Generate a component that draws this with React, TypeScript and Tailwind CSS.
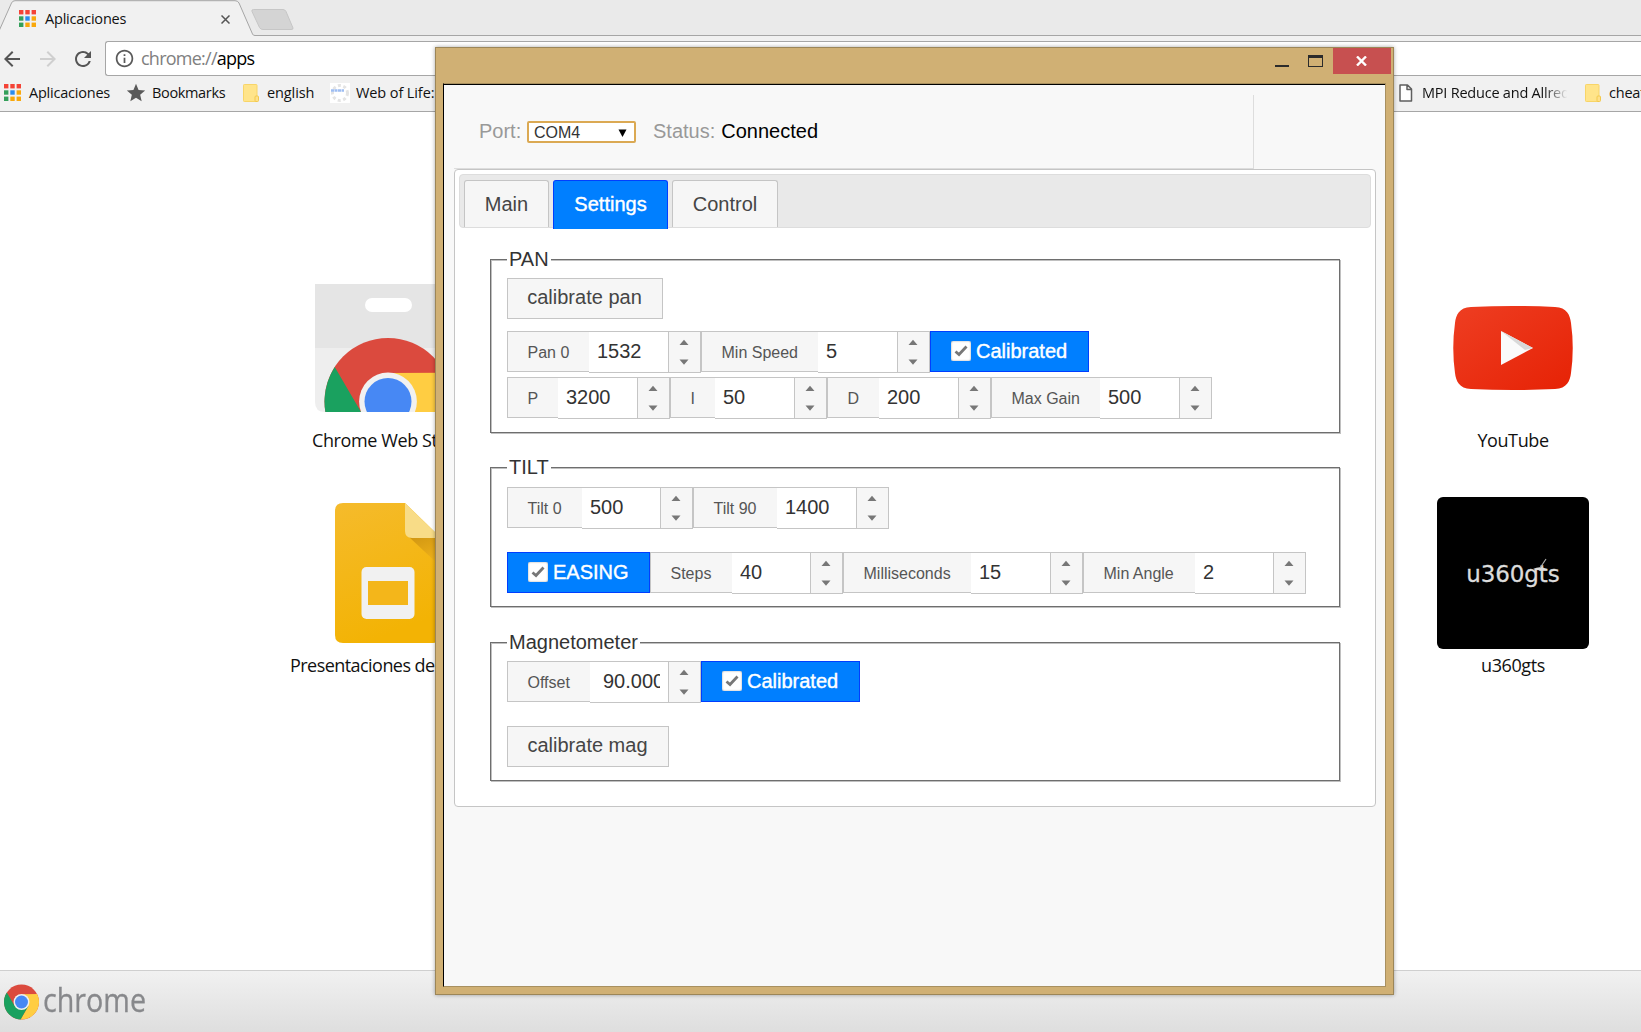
import React from "react";
import { MdArrowBack, MdArrowForward, MdRefresh, MdInfoOutline, MdStar } from "react-icons/md";

function AppsIcon() {
  const colors = ["#f44336", "#f44336", "#f44336", "#34a05a", "#2b8cf0", "#f9a80c", "#34a05a", "#f9a80c", "#f9a80c"];
  return (
    <svg width="17" height="17" viewBox="0 0 17 17" className="-ml-px mr-px shrink-0">
      {colors.map((c, i) => (
        <rect key={i} x={(i % 3) * 6.3} y={Math.floor(i / 3) * 6.3} width="4.4" height="4.4" fill={c} />
      ))}
    </svg>
  );
}

function FolderIcon() {
  return (
    <svg width="16" height="18" viewBox="0 0 16 18" className="shrink-0">
      <rect x="0.5" y="0.5" width="13.5" height="17" rx="0.8" fill="#ffe48a" stroke="#f8d568" />
      <rect x="12" y="12" width="3.5" height="5.5" rx="1" fill="#ffe08a" stroke="#f2c94c" />
    </svg>
  );
}

function ChromeDisc({ cx, cy, r, ring }: { cx: number; cy: number; r: number; ring: string }) {
  const p = (deg: number, rad: number) =>
    `${cx + rad * Math.cos((deg * Math.PI) / 180)} ${cy + rad * Math.sin((deg * Math.PI) / 180)}`;
  const i = r * 0.45;
  return (
    <g>
      <circle cx={cx} cy={cy} r={r} fill="#db4a3e" />
      <path d={`M${p(-90, i)} L${p(-27, r)} A${r} ${r} 0 0 1 ${p(93, r)} L${p(30, i)} Z`} fill="#ffcd42" />
      <path d={`M${p(150, i)} L${p(-147, r)} A${r} ${r} 0 0 0 ${p(93, r)} L${p(30, i)} Z`} fill="#1aa15f" />
      <circle cx={cx} cy={cy} r={r * 0.455} fill={ring} />
      <circle cx={cx} cy={cy} r={r * 0.37} fill="#4788f4" />
    </g>
  );
}

function Arrows() {
  return (
    <div className="flex h-full w-[33px] shrink-0 items-center justify-center border-x border-[#c5c5c5] bg-[#f6f6f6]">
      <svg width="10" height="27" viewBox="0 0 10 27" className="-ml-[2px]">
        <path d="M0.5 6 L5 0.8 L9.5 6Z M0.5 20.6 L5 25.8 L9.5 20.6Z" fill="#777" />
      </svg>
    </div>
  );
}

function Field({ label, value, labelW, inputW = "w-[79px]", pad = "pl-[8px]" }: {
  label: string; value: string; labelW: string; inputW?: string; pad?: string;
}) {
  return (
    <div className="flex h-[42px] items-start">
      <div className={`h-[41px] shrink-0 border-y border-l border-[#c5c5c5] bg-[#f6f6f6] pl-[19.5px] text-[16px] leading-[41px] text-[#555] ${labelW}`}>
        {label}
      </div>
      <div className="flex h-[42px] border-y border-[#c5c5c5] bg-white">
        <div className={`shrink-0 pr-2 text-[20px] leading-[38px] text-[#333] ${inputW} ${pad}`}>
          <div className="overflow-hidden whitespace-nowrap">{value}</div>
        </div>
        <Arrows />
      </div>
    </div>
  );
}

function Toggle({ label, width }: { label: string; width: string }) {
  return (
    <div className={`flex h-[41px] items-center gap-[5px] border border-[#003eff] bg-[#007fff] pl-5 text-[20px] text-white [-webkit-text-stroke:0.4px_white] ${width}`}>
      <div className="-mt-[2px] flex size-5 items-center justify-center rounded-[2px] bg-white shadow-[inset_0_0_2px_#999]">
        <svg width="14" height="12" viewBox="0 0 14 12">
          <path d="M1.5 6.5 L5 9.5 L12.5 1.5" fill="none" stroke="#777" strokeWidth="2.8" />
        </svg>
      </div>
      <span className="-mt-px">{label}</span>
    </div>
  );
}

function Button({ label, width }: { label: string; width: string }) {
  return (
    <button className={`block h-[41px] border border-[#c5c5c5] bg-[#f6f6f6] pb-[2px] pr-px text-center text-[20px] leading-[37px] text-[#454545] ${width}`}>
      {label}
    </button>
  );
}

function Group({ title, className, children }: { title: string; className: string; children: React.ReactNode }) {
  return (
    <section className={`relative w-[850px] border border-[#6e6e6e] pl-4 shadow-[1px_1px_0_0_#c0c0c0,inset_1px_1px_0_0_#c0c0c0] ${className}`}>
      <h2 className="absolute -top-[13px] left-4 bg-white px-[2px] text-[20px] leading-[25px] text-[#333]">{title}</h2>
      {children}
    </section>
  );
}

function Browser() {
  return (
    <div className="flex h-[1032px] w-[1641px] flex-col bg-white font-['Open_Sans',sans-serif]">
      <div className="relative flex h-[36px] shrink-0 items-center bg-[#eaeaea]">
        <svg width="1641" height="36" className="absolute left-0 top-0">
          <path d="M254 35.5 H1641" stroke="#a6a6a6" />
          <path d="M-2 36 L0 30 L11.5 3 Q12.5 0.7 15 0.7 H235 Q237.8 0.7 239 3 L252.5 34 Q253 35.5 255 35.5 V37 H-2Z" fill="#f1f1f1" />
          <path d="M-1 31 L11.5 3 Q12.5 0.7 15 0.7 H235 Q237.8 0.7 239 3 L252.5 34 Q253 35.5 255 35.5" fill="none" stroke="#a6a6a6" />
          <path d="M253.5 9.5 H283 Q285 9.5 286 11.5 L293 28 Q293.5 29.5 291 29.5 H263 Q260.5 29.5 259.5 27.500 L252 11.5 Q251.3 9.5 253.5 9.5Z" fill="#d4d4d4" stroke="#c6c6c6" />
        </svg>
        <div className="relative flex items-center pl-5">
          <AppsIcon />
          <span className="ml-2 mt-px w-[176px] text-[14.5px] tracking-[-0.2px] text-[#111]">Aplicaciones</span>
          <svg width="9" height="9" viewBox="0 0 9 9" className="mt-[2px]"><path d="M0.5 0.5 L8.5 8.5 M8.5 0.5 L0.5 8.5" stroke="#555" strokeWidth="1.5" /></svg>
        </div>
      </div>

      <div className="flex h-[40px] shrink-0 items-center bg-[#f1f1f1] pt-[5px] text-[#555]">
        <MdArrowBack size={24} className="shrink-0" />
        <MdArrowForward size={24} className="ml-[12px] shrink-0 text-[#cfcfcf]" />
        <MdRefresh size={24} className="ml-[11px] shrink-0" />
        <div className="ml-[10px] flex h-[35px] flex-1 items-center rounded-l-[3px] border border-r-0 border-[#a6a6a6] bg-white">
          <MdInfoOutline size={21} className="ml-2 shrink-0 text-[#5a5a5a]" />
          <span className="ml-[6px] text-[18px] tracking-[-0.75px] text-[#808080]">chrome://<span className="text-black">apps</span></span>
        </div>
      </div>

      <div className="flex h-[36px] shrink-0 items-center overflow-hidden border-b border-[#a6a6a6] bg-[#f1f1f1] pb-[2px] pl-[5px] text-[14.5px] tracking-[-0.22px] text-[#111]">
        <AppsIcon />
        <span className="ml-[7px] w-[96px] shrink-0">Aplicaciones</span>
        <MdStar size={22} className="shrink-0 text-[#5a5a5a]" />
        <span className="ml-[5px] w-[91px] shrink-0 tracking-[-0.35px]">Bookmarks</span>
        <FolderIcon />
        <span className="ml-[8px] w-[63px] shrink-0 tracking-[-0.1px]">english</span>
        <svg width="20" height="20" viewBox="0 0 20 20" className="shrink-0">
          <rect width="20" height="20" fill="#fff" />
          <circle cx="10" cy="10" r="7.5" fill="none" stroke="#e4e4e4" strokeWidth="3" strokeDasharray="3 2.5" />
          <path d="M1 7.5 H14" stroke="#9dbdf2" strokeWidth="2.5" strokeDasharray="3 0.5" />
        </svg>
        <span className="ml-[6px] w-[1043px] shrink-0 tracking-[-0.1px]">Web of Life:</span>
        <svg width="14" height="18" viewBox="0 0 14 18" className="shrink-0">
          <path d="M1 1 H8.5 L12.5 5 V17 H1Z M8 1 V5.5 H12.5" fill="#fff" stroke="#5f5f5f" strokeWidth="1.5" strokeLinejoin="round" />
        </svg>
        <span className="ml-[9px] w-[147px] shrink-0 overflow-hidden whitespace-nowrap [mask-image:linear-gradient(to_right,black_83%,transparent_99%)]">MPI Reduce and Allreduce</span>
        <span className="w-[16px] shrink-0" />
        <FolderIcon />
        <span className="ml-[8px]">cheat</span>
      </div>

      <main className="flex h-[858px] shrink-0 gap-[949px] pl-[290px] text-[18px] leading-6 tracking-[-0.4px] text-[#111]">
        <div className="w-[198px] pt-[172px]">
          <svg width="146" height="128" viewBox="0 0 146 128" className="ml-[25px]">
            <clipPath id="bag"><path d="M0 0 H146 V118 Q146 128 136 128 H10 Q0 128 0 118Z" /></clipPath>
            <g clipPath="url(#bag)">
              <rect width="146" height="128" fill="#eee" />
              <rect width="146" height="64" fill="#e5e5e5" />
              <rect x="50" y="14" width="47" height="14" rx="7" fill="#fff" />
              <ChromeDisc cx={73} cy={117.5} r={63.5} ring="#f1f1f1" />
            </g>
          </svg>
          <div className="ml-[22px] mt-[16px] whitespace-nowrap">Chrome Web St</div>
          <svg width="106" height="140" viewBox="0 0 106 140" className="ml-[45px] mt-[51px]">
            <defs>
              <linearGradient id="slide" x1="0" y1="0" x2="0.3" y2="1">
                <stop offset="0" stopColor="#f5bb2c" />
                <stop offset="1" stopColor="#f3b304" />
              </linearGradient>
              <linearGradient id="fold" x1="0" y1="0" x2="0.4" y2="1">
                <stop offset="0" stopColor="#cf9512" />
                <stop offset="1" stopColor="#f0b21a" />
              </linearGradient>
            </defs>
            <path d="M8 0 H70 L106 35 V132 Q106 140 98 140 H8 Q0 140 0 132 V8 Q0 0 8 0Z" fill="url(#slide)" />
            <path d="M73 33 L106 64 V34Z" fill="url(#fold)" />
            <path d="M70 0 L106 35 H77 Q70 35 70 28Z" fill="#f8dc87" />
            <rect x="26.500" y="64" width="53" height="52" rx="5" fill="#f1f1f1" />
            <rect x="33" y="78" width="40" height="24" fill="#f4b61a" />
          </svg>
          <div className="mt-[10px] whitespace-nowrap tracking-[-0.55px]">Presentaciones de</div>
        </div>
        <div className="flex w-[152px] flex-col items-center pt-[193px]">
          <svg width="120" height="86" viewBox="0 0 120 86">
            <defs><linearGradient id="yt" x1="0" y1="0" x2="1" y2="1"><stop offset="0" stopColor="#ee3e22" /><stop offset="1" stopColor="#e62205" /></linearGradient></defs>
            <path d="M18 2 Q60 0 102 2 C114 2.500 117 10 118 18 Q121.500 43 118 68 C117 76 114 83.500 102 84 Q60 86 18 84 C6 83.500 3 76 2 68 Q-1.500 43 2 18 C3 10 6 2.500 18 2Z" fill="url(#yt)" />
            <path d="M48 26 L80 43 L48 60Z" fill="#fafafa" />
            <path d="M48 26 L80 43 L72 45Z" fill="#d8d8d8" />
          </svg>
          <div className="mt-[37px]">YouTube</div>
          <div className="relative mt-[45px] h-[152px] w-[152px] rounded-[6px] bg-black text-center font-['DejaVu_Sans',sans-serif] text-[23px] leading-[154px] tracking-[-0.1px] text-[#dcdcdc] [-webkit-text-stroke:0.3px_#dcdcdc]">
            u360gts
            <svg width="16" height="14" viewBox="0 0 16 14" className="absolute left-[95px] top-[61px]">
              <path d="M1 11 Q8 7.500 15 11 Q8 13.500 1 11Z" fill="#ddd" />
              <path d="M8 10 L14 1" stroke="#aaa" strokeWidth="1.2" />
            </svg>
          </div>
          <div className="mt-[4px]">u360gts</div>
        </div>
      </main>

      <footer className="flex h-[62px] shrink-0 items-start border-t border-[#cfcfcf] bg-linear-to-b from-[#f1f1f1] to-[#dedede] pl-1 pt-[13px]">
        <svg width="36" height="36" viewBox="0 0 36 36"><ChromeDisc cx={17.5} cy={18} r={17.5} ring="#eee" /></svg>
        <span className="ml-[3px] mt-[-6px] origin-left scale-x-[0.87] text-[33px] leading-[44px] text-[#87888b] [-webkit-text-stroke:0.3px_#87888b]">chrome</span>
      </footer>
    </div>
  );
}

function SettingsWindow() {
  return (
    <div className="absolute left-[435px] top-[47px] flex h-[948px] w-[959px] flex-col border border-[#9c8658] bg-[#d0b074] font-['Liberation_Sans',Arial,sans-serif] shadow-[0_0_4px_rgba(0,0,0,0.35)]">
      <div className="flex h-[35px] shrink-0 items-start justify-end pr-[2px]">
        <div className="mr-[19px] mt-[17px] h-[2px] w-[14px] bg-[#2b2b2b]" />
        <div className="mr-[10px] mt-[7px] h-[12px] w-[15px] border border-t-[3px] border-[#2b2b2b]" />
        <div className="flex h-[26px] w-[58px] items-center justify-center bg-[#c75050] pr-[2px]">
          <svg width="11" height="10" viewBox="0 0 11 10"><path d="M1 0.5 L10 9.5 M10 0.5 L1 9.5" stroke="#fff" strokeWidth="2.4" /></svg>
        </div>
      </div>
      <div className="mx-[7px] mb-[7px] flex flex-1 flex-col border border-b-[#a89060] border-l-black border-r-[#a89060] border-t-[#a89060] bg-[#f8f8f8]">
        <div className="h-px w-full shrink-0 bg-black" />
        <header className="ml-[10px] mt-[10px] flex h-[74px] w-[800px] shrink-0 items-start border-b border-r border-[#ddd] pl-[25px] pt-6 text-[20px] leading-[24px] text-[#999]">
          <span className="w-[48px]">Port:</span>
          <div className="mt-[2px] flex h-[22px] w-[109px] items-center justify-between rounded-[2px] border-2 border-[#dba953] bg-white pl-[5px] pr-[7px] pt-px text-[16px] text-[#333]">
            <span>COM4</span>
            <svg width="9" height="8" viewBox="0 0 9 8"><path d="M0.5 0.5 H8.5 L4.5 8Z" fill="#000" /></svg>
          </div>
          <span className="ml-[17px]">Status:</span>
          <span className="ml-[6px] text-black">Connected</span>
        </header>
        <div className="ml-[10px] h-[638px] w-[922px] shrink-0 rounded-[4px] border border-[#c5c5c5] bg-white p-1">
          <nav className="flex h-[54px] gap-1 rounded-[4px] border border-[#ddd] bg-[#e9e9e9] pl-1 pt-[5px] text-[20px] text-[#454545]">
            <div className="h-[47px] w-[85px] rounded-t-[3px] border border-b-0 border-[#c5c5c5] bg-[#f6f6f6] text-center leading-[47px]">Main</div>
            <div className="h-[49px] w-[115px] rounded-t-[3px] border border-b-0 border-[#003eff] bg-[#007fff] text-center leading-[47px] text-white [-webkit-text-stroke:0.4px_white]">Settings</div>
            <div className="h-[47px] w-[106px] rounded-t-[3px] border border-b-0 border-[#c5c5c5] bg-[#f6f6f6] text-center leading-[47px]">Control</div>
          </nav>
          <div className="pl-[31px] pt-[31px]">
            <Group title="PAN" className="h-[174px] pt-[18px]">
              <Button label="calibrate pan" width="w-[156px]" />
              <div className="mt-[12px] flex">
                <Field label="Pan 0" value="1532" labelW="w-[82px]" />
                <Field label="Min Speed" value="5" labelW="w-[117px]" />
                <Toggle label="Calibrated" width="w-[159px]" />
              </div>
              <div className="mt-[4px] flex">
                <Field label="P" value="3200" labelW="w-[51px]" />
                <Field label="I" value="50" labelW="w-[45px]" />
                <Field label="D" value="200" labelW="w-[52px]" />
                <Field label="Max Gain" value="500" labelW="w-[109px]" />
              </div>
            </Group>
            <Group title="TILT" className="mt-[34px] h-[140px] pt-[19px]">
              <div className="flex">
                <Field label="Tilt 0" value="500" labelW="w-[75px]" inputW="w-[78px]" />
                <Field label="Tilt 90" value="1400" labelW="w-[84px]" />
              </div>
              <div className="mt-[23px] flex">
                <Toggle label="EASING" width="w-[143px]" />
                <Field label="Steps" value="40" labelW="w-[82px]" inputW="w-[78px]" />
                <Field label="Milliseconds" value="15" labelW="w-[128px]" />
                <Field label="Min Angle" value="2" labelW="w-[112px]" inputW="w-[78px]" />
              </div>
            </Group>
            <Group title="Magnetometer" className="mt-[35px] h-[139px] pt-[18px]">
              <div className="flex">
                <Field label="Offset" value="90.000" labelW="w-[83px]" inputW="w-[78px]" pad="pl-[13px]" />
                <Toggle label="Calibrated" width="w-[159px]" />
              </div>
              <div className="mt-[23px]"><Button label="calibrate mag" width="w-[162px]" /></div>
            </Group>
          </div>
        </div>
      </div>
    </div>
  );
}

export default function App() {
  return (
    <div className="relative h-[1032px] w-[1641px] overflow-hidden">
      <Browser />
      <SettingsWindow />
    </div>
  );
}
